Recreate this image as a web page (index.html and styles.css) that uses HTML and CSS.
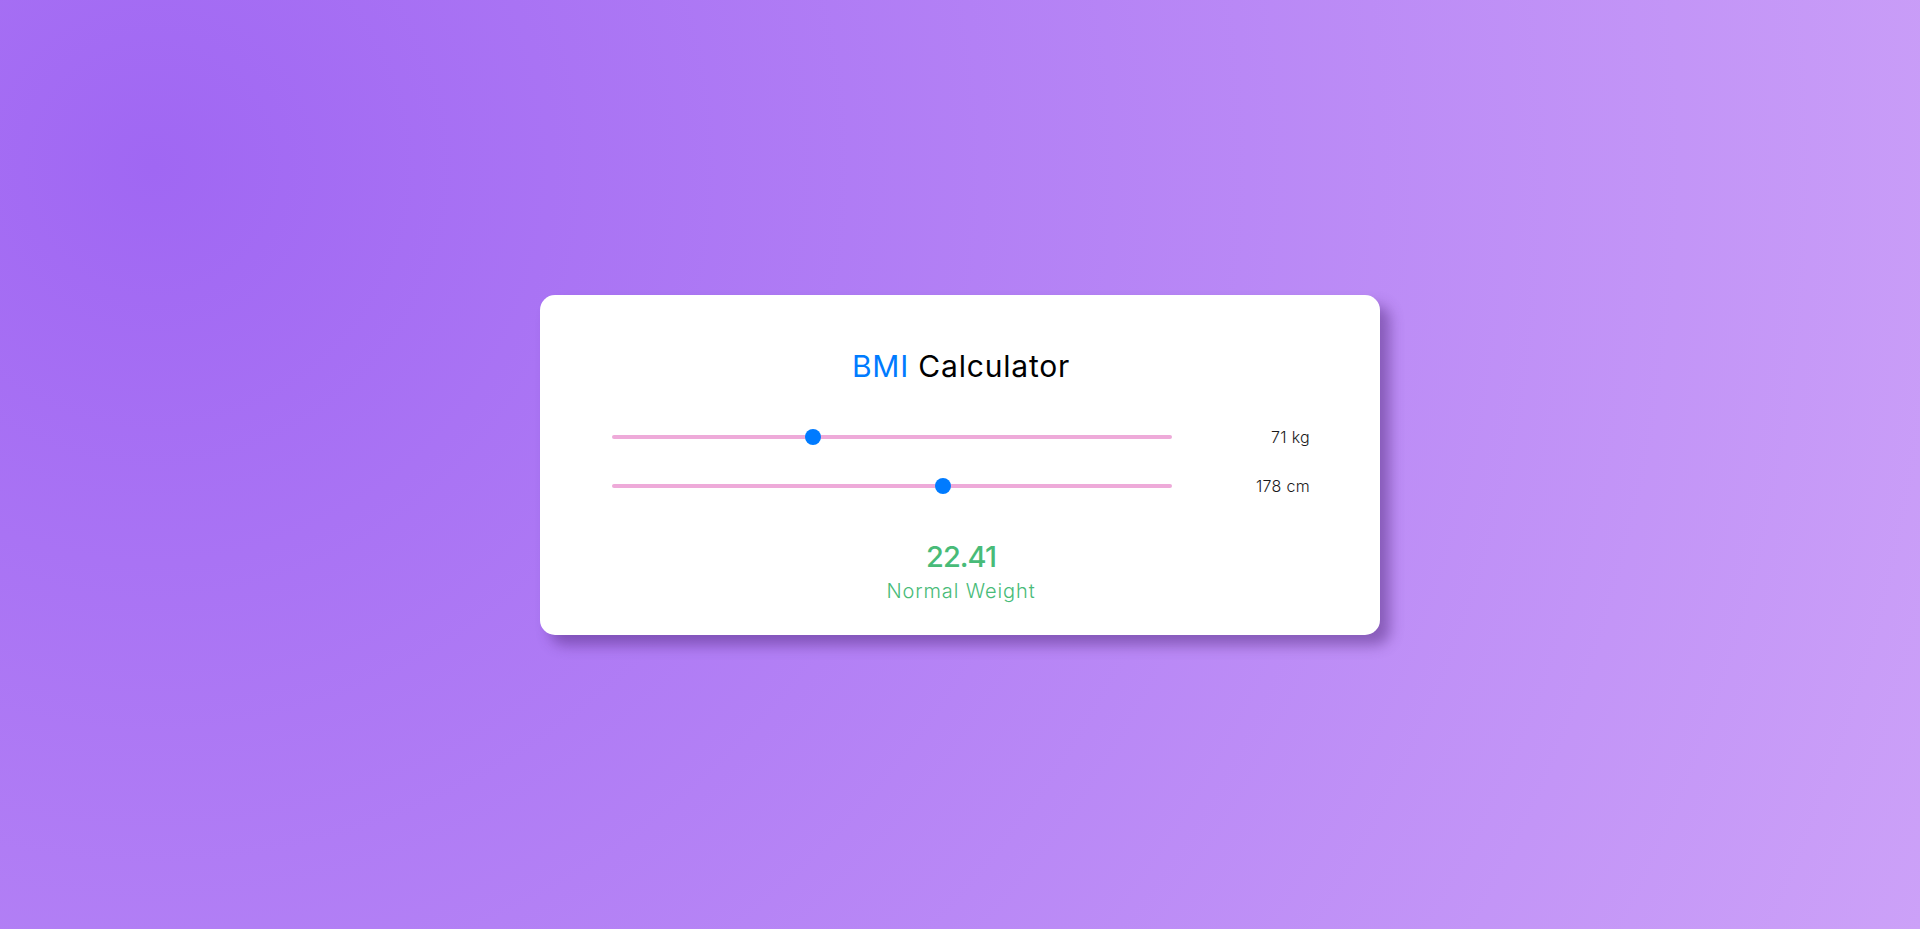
FILE: index.html
```html
<!DOCTYPE html>
<html lang="en">
<head>
<meta charset="utf-8">
<title>BMI Calculator</title>
<link rel="stylesheet" href="styles.css">
</head>
<body>
  <main class="card">
    <h1 class="title"><span class="accent">BMI</span> Calculator</h1>
    <div class="controls">
      <div class="row">
        <input class="slider" type="range" min="0" max="200" value="71">
        <span class="value">71 kg</span>
      </div>
      <div class="row">
        <input class="slider" type="range" min="0" max="300" value="178">
        <span class="value">178 cm</span>
      </div>
    </div>
    <div class="result">
      <div class="bmi">22.41</div>
      <div class="status">Normal Weight</div>
    </div>
  </main>
</body>
</html>
```
FILE: styles.css
```css
html, body {
  margin: 0;
  padding: 0;
}
body {
  min-height: 100vh;
  display: flex;
  align-items: center;
  justify-content: center;
  font-family: "Inter", "Open Sans", sans-serif;
  background: radial-gradient(circle farthest-corner at 8% 18%, #a067f3 0%, #cca1f8 100%);
}
.card {
  box-sizing: border-box;
  width: 840px;
  background: #fff;
  border-radius: 15px;
  padding: 53px 70px 32px 72px;
  box-shadow: 10px 10px 14px rgba(70, 30, 110, 0.45);
}
.title {
  margin: 0;
  font-size: 30px;
  line-height: 36px;
  font-weight: 400;
  text-align: center;
  color: #000;
  letter-spacing: 0.8px;
}
.accent {
  color: #007bff;
}
.controls {
  margin-top: 41px;
  display: flex;
  flex-direction: column;
  gap: 25px;
}
.row {
  height: 24px;
  display: flex;
  align-items: center;
  justify-content: space-between;
}
.slider {
  -webkit-appearance: none;
  appearance: none;
  width: 560px;
  height: 4px;
  margin: 0;
  padding: 0;
  border-radius: 2px;
  background: #eeaad9;
  outline: none;
}
.slider::-webkit-slider-thumb {
  -webkit-appearance: none;
  appearance: none;
  width: 16px;
  height: 16px;
  border-radius: 50%;
  background: #007bff;
  border: none;
  cursor: pointer;
}
.value {
  font-size: 16px;
  font-weight: 300;
  color: #1a1a1a;
  letter-spacing: 0.3px;
}
.result {
  margin-top: 41px;
  display: flex;
  flex-direction: column;
  align-items: center;
  gap: 4px;
  color: #48bb78;
}
.bmi {
  font-size: 29px;
  line-height: 36px;
  font-weight: 500;
  letter-spacing: -1px;
}
.status {
  font-size: 20px;
  line-height: 24px;
  font-weight: 300;
  letter-spacing: 0.9px;
}
```
